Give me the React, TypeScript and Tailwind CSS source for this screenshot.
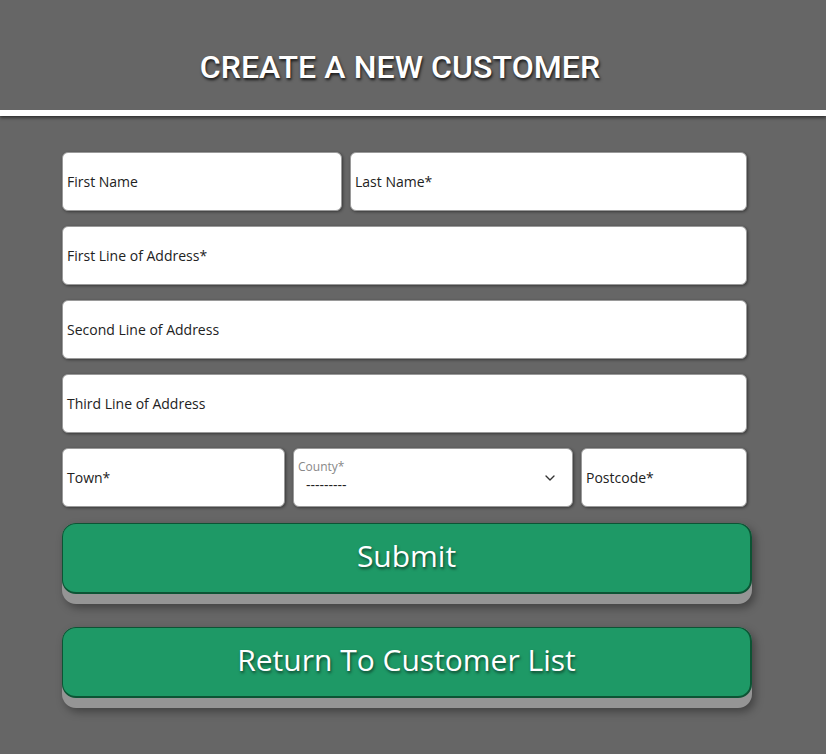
import { ChevronDown } from 'lucide-react'

const field =
  'h-[59px] bg-white rounded-md border border-[#9a9a9a] shadow-[1px_1px_3px_rgba(0,0,0,0.45)] flex items-center pl-[4px] text-[14px] text-[#222] font-["Open_Sans",sans-serif]'

function Field({ label, className = '' }: { label: string; className?: string }) {
  return <div className={`${field} ${className}`}>{label}</div>
}

function Button({ label }: { label: string }) {
  return (
    <div className="rounded-[14px] bg-[#959595] pb-[10px] shadow-[3px_4px_8px_rgba(0,0,0,0.35)]">
      <button className="w-full h-[71px] pb-[5px] rounded-[14px] bg-[#1e9966] border border-[#0c5434] border-b-2 border-r-2 text-white text-[30px] font-['Open_Sans',sans-serif] [text-shadow:1px_2px_3px_rgba(0,0,0,0.55)]">
        {label}
      </button>
    </div>
  )
}

export default function App() {
  return (
    <div className="min-h-[754px] bg-[#666666]">
      <div className="h-[116px] border-b-[6px] border-white shadow-[0_-1px_2px_rgba(0,0,0,0.4),0_2px_3px_rgba(0,0,0,0.5)] flex items-center justify-center pr-[26px] pt-[24px]">
        <h1 className="text-white text-[32px] font-medium font-['Roboto',sans-serif] tracking-[0.1px] [text-shadow:1px_2px_3px_rgba(0,0,0,0.8)]">
          CREATE A NEW CUSTOMER
        </h1>
      </div>

      <div className="ml-[62px] w-[685px] pt-[36px] flex flex-col gap-[15px]">
        <div className="flex gap-[8px]">
          <Field label="First Name" className="w-[280px]" />
          <Field label="Last Name*" className="flex-1" />
        </div>
        <Field label="First Line of Address*" />
        <Field label="Second Line of Address" />
        <Field label="Third Line of Address" />
        <div className="flex gap-[8px]">
          <Field label="Town*" className="w-[223px]" />
          <div className="w-[280px] h-[59px] bg-white rounded-md border border-[#9a9a9a] shadow-[1px_1px_3px_rgba(0,0,0,0.45)] flex items-center pl-[4px] pr-[14px] font-['Open_Sans',sans-serif]">
            <div className="flex-1 flex flex-col -mt-[2px]">
              <span className="text-[12px] text-[#888] leading-[16px]">County*</span>
              <span className="text-[14px] text-[#222] pl-[8px] leading-[20px]">---------</span>
            </div>
            <ChevronDown className="w-[16px] h-[16px] text-[#333]" strokeWidth={2} />
          </div>
          <Field label="Postcode*" className="flex-1" />
        </div>
      </div>

      <div className="ml-[62px] w-[690px] pt-[16px] flex flex-col gap-[23px]">
        <Button label="Submit" />
        <Button label="Return To Customer List" />
      </div>
    </div>
  )
}
